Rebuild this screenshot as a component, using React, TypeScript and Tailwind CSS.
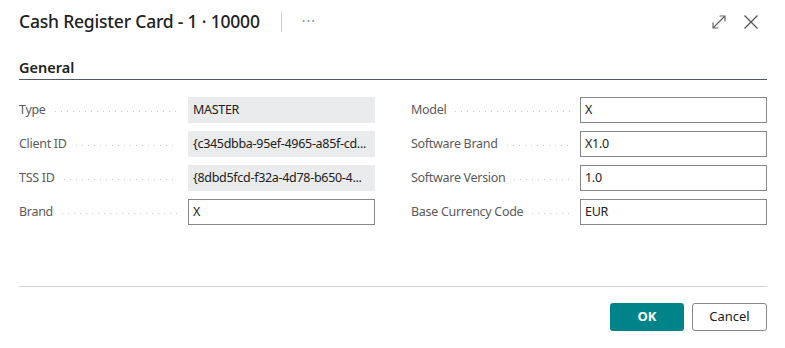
import React from 'react'

const left = [
  { label: 'Type', value: 'MASTER', readOnly: true },
  { label: 'Client ID', value: '{c345dbba-95ef-4965-a85f-cd...', readOnly: true },
  { label: 'TSS ID', value: '{8dbd5fcd-f32a-4d78-b650-4...', readOnly: true },
  { label: 'Brand', value: 'X', readOnly: false },
]

const right = [
  { label: 'Model', value: 'X', readOnly: false },
  { label: 'Software Brand', value: 'X1.0', readOnly: false },
  { label: 'Software Version', value: '1.0', readOnly: false },
  { label: 'Base Currency Code', value: 'EUR', readOnly: false },
]

type Field = { label: string; value: string; readOnly: boolean }

const FieldRow = ({ label, value, readOnly }: Field) => (
  <div className="flex items-center h-[26px]">
    <span className="text-[12.5px] tracking-[-0.3px] text-[#5b5b5b] whitespace-nowrap">{label}</span>
    <span className="flex-1 ml-[9px] mr-[10px] h-px mt-[3px] bg-[linear-gradient(to_right,#c6c6c6_1px,transparent_1px)] bg-[length:6px_1px] bg-repeat-x" />
    <div
      className={
        readOnly
          ? 'w-[187px] h-[26px] flex items-center px-[5px] bg-[#eaebec] text-[12.5px] tracking-[-0.3px] text-[#212121] whitespace-nowrap overflow-hidden'
          : 'w-[187px] h-[26px] flex items-center px-[4px] border border-[#8a8886] bg-white text-[12.5px] tracking-[-0.3px] text-[#212121] whitespace-nowrap overflow-hidden'
      }
    >
      {value}
    </div>
  </div>
)

const App = () => {
  return (
    <div className="w-[785px] h-[348px] bg-white pl-[19px] pr-[18px] font-['Noto_Sans',sans-serif] text-[#212121]">
      <div className="flex items-center h-[44px]">
        <h1 className="text-[17.5px] tracking-[-0.2px] font-medium leading-none">Cash Register Card - 1 · 10000</h1>
        <div className="w-px h-[20px] bg-[#d0d0d0] ml-[21px]" />
        <span className="ml-[20px] text-[14px] text-[#8a8a8a] tracking-[1px] -mt-[4px]">···</span>
        <div className="flex-1" />
        <svg width="16" height="16" viewBox="0 0 16 16" className="mr-[16px]" fill="none" stroke="#666" strokeWidth="1.2">
          <path d="M2 14 L14 2 M8.5 2 H14 V7.5 M2 8.5 V14 H7.5" />
        </svg>
        <svg width="16" height="16" viewBox="0 0 16 16" className="mr-[8px]" fill="none" stroke="#555" strokeWidth="1.3">
          <path d="M1.5 1.5 L14.5 14.5 M14.5 1.5 L1.5 14.5" />
        </svg>
      </div>

      <div className="pt-[13px]">
        <h2 className="text-[14.5px] font-semibold leading-[20px] pb-[2px]">General</h2>
        <div className="h-px bg-[#4f5b6b]" />
      </div>

      <div className="grid grid-cols-2 gap-x-[36px] mt-[17px]">
        <div className="flex flex-col gap-[8px]">
          {left.map((f) => (
            <FieldRow key={f.label} {...f} />
          ))}
        </div>
        <div className="flex flex-col gap-[8px]">
          {right.map((f) => (
            <FieldRow key={f.label} {...f} />
          ))}
        </div>
      </div>

      <div className="h-px bg-[#d2d2d2] mt-[61px]" />

      <div className="flex justify-end gap-[8px] mt-[16px]">
        <button className="w-[74px] h-[28px] rounded-[3px] bg-[#008489] text-white text-[13px] font-bold">
          OK
        </button>
        <button className="w-[75px] h-[28px] rounded-[3px] border border-[#8a8886] bg-white text-[13px] text-[#212121]">
          Cancel
        </button>
      </div>
    </div>
  )
}

export default App
